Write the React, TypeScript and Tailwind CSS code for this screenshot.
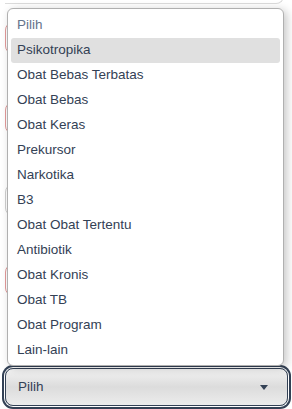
import React from "react";

const options = [
  "Psikotropika",
  "Obat Bebas Terbatas",
  "Obat Bebas",
  "Obat Keras",
  "Prekursor",
  "Narkotika",
  "B3",
  "Obat Obat Tertentu",
  "Antibiotik",
  "Obat Kronis",
  "Obat TB",
  "Obat Program",
  "Lain-lain",
];

const fields = [
  { top: "mt-[18px]", border: "border-[#e29a9a]" },
  { top: "mt-[48px]", border: "border-[#e29a9a]" },
  { top: "mt-[50px]", border: "border-[#cfcfcf]" },
  { top: "mt-[48px]", border: "border-[#e29a9a]" },
];

export default function App() {
  return (
    <div className="relative w-[292px] h-[409px] overflow-hidden bg-white font-['Liberation_Sans',Arial,sans-serif]">
      {/* page behind the open list */}
      <div className="flex flex-col px-[5px]">
        <div className="h-[4px] w-[279px] -mt-[4px] border-b border-r border-[#dcdcdc] rounded-br-[8px] pb-[7px]" />
        {fields.map((f, i) => (
          <div key={i} className={`${f.top} h-[32px] w-[279px] rounded-[8px] border ${f.border} bg-white`} />
        ))}
      </div>

      {/* focused select */}
      <div className="absolute left-[5px] top-[368px] w-[283px] h-[38px] rounded-[8px] border border-[#334155] ring-2 ring-[#334155] ring-offset-1 bg-gradient-to-b from-[#f3f3f3] via-[#dcdcdc] to-[#ececec] flex items-center justify-between pl-[12px] pr-[19px]">
        <span className="text-[13.5px] text-[#334155]">Pilih</span>
        <svg width="8" height="5" viewBox="0 0 8 5">
          <path d="M0 0h8L4 5z" fill="#334155" />
        </svg>
      </div>

      {/* native list popup */}
      <div className="absolute left-[7px] top-[8px] w-[277px] h-[358px] rounded-[6px] border border-[#b0b0b0] bg-white shadow-[3px_2px_10px_rgba(0,0,0,0.22)] pt-[4px] px-[3px] flex flex-col">
        <div className="h-[25px] flex items-center pl-[6px] text-[13.5px] text-[#64748b]">Pilih</div>
        {options.map((o, i) => (
          <div
            key={o}
            className={`h-[25px] flex items-center pl-[6px] text-[13.5px] text-[#334155] rounded-[3px] ${i === 0 ? "bg-[#e0e0e0] text-[#1f2937]" : ""}`}
          >
            {o}
          </div>
        ))}
      </div>
    </div>
  );
}
